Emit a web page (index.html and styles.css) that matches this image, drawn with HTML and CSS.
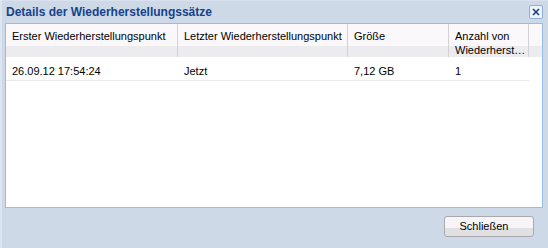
FILE: index.html
```html
<!DOCTYPE html>
<html lang="de">
<head>
<meta charset="utf-8">
<title>Details der Wiederherstellungssätze</title>
<link rel="stylesheet" href="styles.css">
</head>
<body>
<div class="window">
  <div class="titlebar">
    <span class="title">Details der Wiederherstellungssätze</span>
    <span class="tool-close" title="Schließen">
      <svg width="14" height="14" viewBox="0 0 14 14">
        <rect x="0.5" y="0.5" width="13" height="13" rx="1.5" fill="#eef3fa" stroke="#8eaedb"/>
        <path d="M4 4 L10 10 M10 4 L4 10" stroke="#15428b" stroke-width="1.6" fill="none"/>
      </svg>
    </span>
  </div>
  <div class="panel">
    <div class="grid-header">
      <div class="hcell c1">Erster Wiederherstellungspunkt</div>
      <div class="hcell c2">Letzter Wiederherstellungspunkt</div>
      <div class="hcell c3">Größe</div>
      <div class="hcell c4"><span class="line">Anzahl von</span><span class="line clip">Wiederherstellungspunkten</span></div>
    </div>
    <div class="grid-row">
      <div class="cell c1">26.09.12 17:54:24</div>
      <div class="cell c2">Jetzt</div>
      <div class="cell c3">7,12 GB</div>
      <div class="cell c4">1</div>
    </div>
  </div>
  <div class="footer">
    <button class="btn">Schließen</button>
  </div>
</div>
</body>
</html>
```

FILE: styles.css
```css
html, body {
  margin: 0;
  padding: 0;
}
body {
  width: 548px;
  height: 248px;
  overflow: hidden;
  font-family: "Liberation Sans", Arial, sans-serif;
  font-size: 11px;
  color: #000;
}
.window {
  box-sizing: border-box;
  width: 548px;
  height: 248px;
  background: #ced9e7;
  box-shadow: inset 2px 0 0 #dde5f0, inset 0 1px 0 #d8e1ed;
  padding: 0 5px;
  display: flex;
  flex-direction: column;
}
.titlebar {
  height: 23px;
  display: flex;
  justify-content: space-between;
  align-items: flex-start;
  flex: none;
}
.title {
  padding: 5px 0 0 1px;
  font-weight: bold;
  font-size: 12px;
  line-height: 14px;
  color: #15428b;
}
.tool-close {
  margin-top: 5px;
  width: 14px;
  height: 14px;
  display: block;
}
.tool-close svg {
  display: block;
}
.panel {
  box-sizing: border-box;
  height: 185px;
  flex: none;
  border: 1px solid #99bbe8;
  background: #fff;
}
.grid-header {
  display: flex;
  height: 33px;
  background: linear-gradient(#fbf8fb 0, #fbf8fb 22px, #ececef 22px, #ececef 33px);
}
.hcell {
  box-sizing: border-box;
  height: 33px;
  padding: 5px 0 0 6px;
  line-height: 14px;
  border-right: 1px solid #d2d2d6;
  white-space: nowrap;
  overflow: hidden;
}
.c1 { width: 172px; }
.c2 { width: 170px; }
.c3 { width: 101px; }
.c4 { width: 80px; }
.hcell.c4 {
  display: flex;
  flex-direction: column;
  padding-right: 0;
}
.line {
  display: block;
}
.clip {
  overflow: hidden;
  text-overflow: ellipsis;
  white-space: nowrap;
  max-width: 73px;
}
.grid-row {
  display: flex;
  width: 523px;
  height: 24px;
  box-sizing: border-box;
  border-bottom: 1px solid #e6e9ee;
}
.cell {
  box-sizing: border-box;
  padding: 7px 0 0 6px;
  line-height: 14px;
  white-space: nowrap;
}
.footer {
  display: flex;
  justify-content: flex-end;
  padding-top: 8px;
  padding-right: 9px;
}
.btn {
  box-sizing: border-box;
  width: 90px;
  height: 21px;
  margin: 0;
  padding: 0 10px 0 0;
  border: 1px solid #a9a9ad;
  border-radius: 3px;
  background: linear-gradient(#f8f5f8 0, #f8f5f8 11px, #e0e0e2 11px, #e0e0e2 100%);
  font-family: "Liberation Sans", Arial, sans-serif;
  font-size: 11px;
  line-height: 19px;
  color: #000;
  text-align: center;
}
```
